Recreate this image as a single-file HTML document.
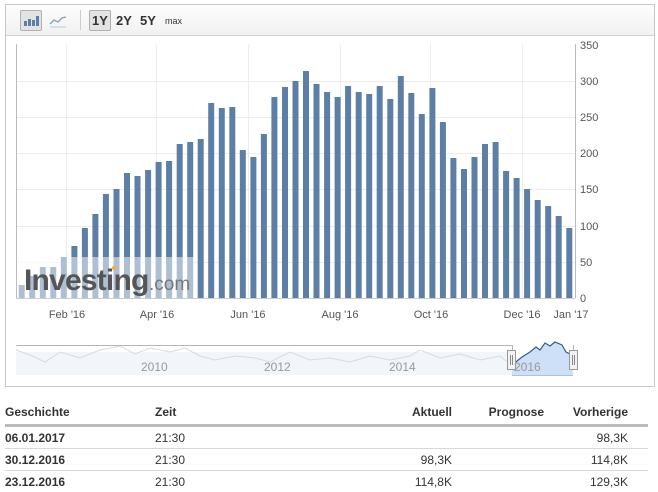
<!DOCTYPE html>
<html><head><meta charset="utf-8"><style>
body{margin:0;width:658px;height:490px;background:#fff;font-family:"Liberation Sans",Arial,sans-serif;position:relative;overflow:hidden}
.box{position:absolute;left:5px;top:4px;width:648px;height:381px;border:1px solid #c8c8c8;}
.tb{position:absolute;left:0;top:0;width:648px;height:30px;background:linear-gradient(#fdfdfd,#f1f1f1);border-bottom:1px solid #d0d0d0}
.btn{position:absolute;top:5px;height:19px;border:1px solid #b0b0b0;background:#e3e3e3;border-radius:2px}
.t{position:absolute;top:8px;font-size:13px;font-weight:bold;color:#333}
table{position:absolute;left:5px;top:400px;width:643px;border-collapse:collapse;font-size:12px;color:#333}
th{font-weight:bold;text-align:left;height:24px;padding:0;border-bottom:3px solid #bbb;vertical-align:middle}
td{height:21px;padding:0;border-bottom:1px solid #d8d8d8}
.r{text-align:right}
</style></head><body>
<div class="box">
<div class="tb">
<div class="btn" style="left:14px;width:20px"></div>
<svg style="position:absolute;left:17px;top:10px" width="16" height="12"><rect x="1" y="6" width="3" height="5" fill="#5b7fa6"/><rect x="5" y="4" width="3" height="7" fill="#5b7fa6"/><rect x="9" y="5" width="3" height="6" fill="#5b7fa6"/><rect x="13" y="1" width="3" height="10" fill="#5b7fa6"/></svg>
<svg style="position:absolute;left:43px;top:9px" width="18" height="14"><path d="M1 10 L5 6 L9 8 L13 4 L17 3" stroke="#7fa1c4" fill="none" stroke-width="1.3"/><line x1="1" y1="13" x2="17" y2="13" stroke="#b9c8d8"/></svg>
<div style="position:absolute;left:74px;top:5px;width:1px;height:20px;background:#ccc"></div>
<div class="btn" style="left:83px;width:20px"></div>
<div class="t" style="left:86px;top:8px">1Y</div>
<div class="t" style="left:110px">2Y</div>
<div class="t" style="left:134px">5Y</div>
<div style="position:absolute;left:159px;top:11px;font-size:9px;color:#333">max</div>
</div>
</div>
<svg style="position:absolute;left:0;top:0" width="658" height="390" font-family="Liberation Sans,Arial,sans-serif">
<g stroke="#ececec" stroke-width="1">
<line x1="16" y1="81.5" x2="575" y2="81.5"/><line x1="16" y1="117.5" x2="575" y2="117.5"/><line x1="16" y1="153.5" x2="575" y2="153.5"/><line x1="16" y1="189.5" x2="575" y2="189.5"/><line x1="16" y1="226.5" x2="575" y2="226.5"/><line x1="16" y1="262.5" x2="575" y2="262.5"/>
<line x1="66.5" y1="44" x2="66.5" y2="298"/><line x1="156.5" y1="44" x2="156.5" y2="298"/><line x1="248.5" y1="44" x2="248.5" y2="298"/><line x1="340.5" y1="44" x2="340.5" y2="298"/><line x1="430.5" y1="44" x2="430.5" y2="298"/><line x1="522.5" y1="44" x2="522.5" y2="298"/>
</g>
<line x1="16.5" y1="44" x2="16.5" y2="298" stroke="#bbb"/>
<line x1="575.5" y1="44" x2="575.5" y2="298" stroke="#bbb"/>
<line x1="16" y1="298.5" x2="575" y2="298.5" stroke="#ccc"/>
<g fill="#5d7fa6">
<rect x="18.7" y="285" width="6" height="13"/><rect x="29.2" y="276" width="6" height="22"/><rect x="39.8" y="267" width="6" height="31"/><rect x="50.3" y="267" width="6" height="31"/><rect x="60.8" y="257" width="6" height="41"/><rect x="71.4" y="246" width="6" height="52"/><rect x="81.9" y="228" width="6" height="70"/><rect x="92.4" y="214" width="6" height="84"/><rect x="102.9" y="194" width="6" height="104"/><rect x="113.5" y="189" width="6" height="109"/><rect x="124" y="173" width="6" height="125"/><rect x="134.5" y="176" width="6" height="122"/><rect x="145.1" y="170" width="6" height="128"/><rect x="155.6" y="162" width="6" height="136"/><rect x="166.1" y="161" width="6" height="137"/><rect x="176.7" y="144" width="6" height="154"/><rect x="187.2" y="142" width="6" height="156"/><rect x="197.7" y="139" width="6" height="159"/><rect x="208.2" y="103" width="6" height="195"/><rect x="218.8" y="108" width="6" height="190"/><rect x="229.3" y="107" width="6" height="191"/><rect x="239.8" y="150" width="6" height="148"/><rect x="250.4" y="157" width="6" height="141"/><rect x="260.9" y="134" width="6" height="164"/><rect x="271.4" y="97" width="6" height="201"/><rect x="282" y="87" width="6" height="211"/><rect x="292.5" y="81" width="6" height="217"/><rect x="303" y="71" width="6" height="227"/><rect x="313.5" y="84" width="6" height="214"/><rect x="324.1" y="92" width="6" height="206"/><rect x="334.6" y="97" width="6" height="201"/><rect x="345.1" y="86" width="6" height="212"/><rect x="355.7" y="92" width="6" height="206"/><rect x="366.2" y="94" width="6" height="204"/><rect x="376.7" y="86" width="6" height="212"/><rect x="387.3" y="99" width="6" height="199"/><rect x="397.8" y="76" width="6" height="222"/><rect x="408.3" y="93" width="6" height="205"/><rect x="418.8" y="114" width="6" height="184"/><rect x="429.4" y="88" width="6" height="210"/><rect x="439.9" y="122" width="6" height="176"/><rect x="450.4" y="158" width="6" height="140"/><rect x="461" y="169" width="6" height="129"/><rect x="471.5" y="157" width="6" height="141"/><rect x="482" y="144" width="6" height="154"/><rect x="492.6" y="142" width="6" height="156"/><rect x="503.1" y="171" width="6" height="127"/><rect x="513.6" y="178" width="6" height="120"/><rect x="524.1" y="189" width="6" height="109"/><rect x="534.7" y="200" width="6" height="98"/><rect x="545.2" y="206" width="6" height="92"/><rect x="555.7" y="216" width="6" height="82"/><rect x="566.3" y="228" width="6" height="70"/>
</g>
<rect x="17" y="257" width="178" height="41" fill="#fff" opacity="0.5"/>
<text x="24" y="290" font-size="30" font-weight="bold" fill="#555" letter-spacing="-0.8">Investing</text>
<text x="149" y="290" font-size="19" fill="#777">.com</text>
<circle cx="114" cy="268" r="2" fill="#f0b030"/>
<g font-size="11" fill="#555">
<text x="580" y="49">350</text><text x="580" y="85">300</text><text x="580" y="121">250</text><text x="580" y="157">200</text><text x="580" y="193">150</text><text x="580" y="230">100</text><text x="580" y="266">50</text><text x="580" y="302">0</text>
<g text-anchor="middle"><text x="67" y="318">Feb '16</text><text x="157" y="318">Apr '16</text><text x="248" y="318">Jun '16</text><text x="340" y="318">Aug '16</text><text x="431" y="318">Oct '16</text><text x="522" y="318">Dec '16</text><text x="571" y="318">Jan '17</text></g>
</g>
<rect x="16" y="352" width="496" height="23" fill="#f2f6fa"/>
<path d="M16 350 L30 355 L45 362 L60 352 L80 358 L100 350 L120 346 L135 354 L150 348 L170 352 L185 348 L200 356 L215 360 L235 356 L255 358 L270 362 L290 352 L310 360 L330 358 L350 362 L370 356 L390 360 L410 356 L420 350 L440 358 L460 354 L480 360 L500 356 L512 366" stroke="#d2dbe4" fill="none"/>
<path d="M16 345.5 H512.5 V352" stroke="#b5b5b5" fill="none"/>
<path d="M512 375 L512 365 L522 357 L530 352 L536 347 L540 350 L545 343 L550 346 L555 342 L562 345 L566 352 L572 355 L573 375 Z" fill="#cde0f7" stroke="none"/>
<path d="M512 365 L522 357 L530 352 L536 347 L540 350 L545 343 L550 346 L555 342 L562 345 L566 352 L572 355" fill="none" stroke="#2f5f8f" stroke-width="1.2"/>
<line x1="512" y1="375.5" x2="573" y2="375.5" stroke="#a8c4e4"/>
<line x1="573.5" y1="345" x2="573.5" y2="352" stroke="#b5b5b5"/>
<rect x="507.5" y="350.5" width="8" height="19" fill="#f2f2f2" stroke="#999"/>
<line x1="510.5" y1="355" x2="510.5" y2="365" stroke="#888"/><line x1="512.5" y1="355" x2="512.5" y2="365" stroke="#888"/>
<rect x="569.5" y="350.5" width="8" height="19" fill="#f2f2f2" stroke="#999"/>
<line x1="572.5" y1="355" x2="572.5" y2="365" stroke="#888"/><line x1="574.5" y1="355" x2="574.5" y2="365" stroke="#888"/>
<g font-size="12" fill="#999"><text x="141" y="371">2010</text><text x="264" y="371">2012</text><text x="389" y="371">2014</text><text x="514" y="371">2016</text></g>
</svg>
<table>
<tr><th style="width:150px">Geschichte</th><th style="width:120px">Zeit</th><th class="r" style="width:177px">Aktuell</th><th class="r" style="width:92px">Prognose</th><th class="r" style="width:84px">Vorherige</th><th></th></tr>
<tr><td><b>06.01.2017</b></td><td>21:30</td><td class="r"></td><td class="r"></td><td class="r">98,3K</td><td></td></tr>
<tr><td><b>30.12.2016</b></td><td>21:30</td><td class="r">98,3K</td><td class="r"></td><td class="r">114,8K</td><td></td></tr>
<tr><td style="border:none"><b>23.12.2016</b></td><td style="border:none">21:30</td><td class="r" style="border:none">114,8K</td><td class="r" style="border:none"></td><td class="r" style="border:none">129,3K</td><td style="border:none"></td></tr>
</table>
</body></html>
